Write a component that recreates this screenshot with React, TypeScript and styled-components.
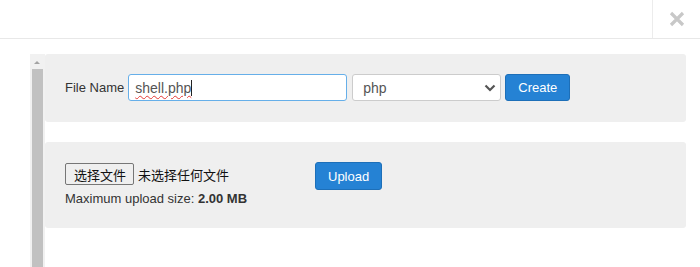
import styled, { createGlobalStyle } from "styled-components";

const GlobalStyle = createGlobalStyle`
  html, body {
    margin: 0;
    background: #fff;
  }
  body {
    font-family: "Liberation Sans", Arial, sans-serif;
    font-size: 13px;
    color: #333;
  }
`;

const Header = styled.div`
  height: 38px;
  border-bottom: 1px solid #e8e8e8;
  display: flex;
  justify-content: flex-end;
`;

const CloseBox = styled.div`
  width: 47px;
  border-left: 1px solid #ececec;
  display: flex;
  align-items: center;
  justify-content: center;
`;

const Body = styled.div`
  display: flex;
  padding: 15px 14px 0 30px;
  height: 213px;
`;

const ScrollTrack = styled.div`
  width: 15px;
  flex: none;
  background: #f1f1f1;
  display: flex;
  flex-direction: column;
  align-items: flex-start;
`;

const ScrollArrow = styled.div`
  width: 0;
  height: 0;
  margin: 7px 0 0 4px;
  border-left: 3px solid transparent;
  border-right: 3px solid transparent;
  border-bottom: 3px solid #a3a3a3;
`;

const ScrollThumb = styled.div`
  flex: 1;
  width: 11px;
  margin: 5px 0 0 2px;
  background: #c1c1c1;
`;

const Content = styled.div`
  flex: 1;
  display: flex;
  flex-direction: column;
  gap: 20px;
`;

const Panel = styled.div<{ $bottom?: number }>`
  background: #efefef;
  border-radius: 3px;
  padding: 20px 20px ${(p) => p.$bottom ?? 20}px;
`;

const Row = styled.div<{ $align?: string }>`
  display: flex;
  align-items: ${(p) => p.$align || "center"};
`;

const Label = styled.span`
  margin-right: 4px;
  color: #333;
`;

const TextField = styled.div`
  box-sizing: border-box;
  width: 219px;
  height: 27px;
  border: 1px solid #66afe9;
  border-radius: 3px;
  background: #fff;
  padding: 0 6px;
  display: flex;
  align-items: center;
  color: #555;
  font-size: 14px;
`;

const Typed = styled.span`
  text-decoration: underline wavy #e53935;
  text-decoration-thickness: 1px;
  text-underline-offset: 2px;
`;

const Caret = styled.span`
  width: 1px;
  height: 16px;
  background: #222;
`;

const Select = styled.div`
  box-sizing: border-box;
  width: 149px;
  height: 27px;
  margin-left: 5px;
  border: 1px solid #ccc;
  border-radius: 3px;
  background: #fff;
  padding: 0 4px 0 10px;
  display: flex;
  align-items: center;
  justify-content: space-between;
  color: #555;
  font-size: 14px;
`;

const Button = styled.button<{ $h: number; $gap?: number }>`
  box-sizing: border-box;
  height: ${(p) => p.$h}px;
  padding: 0 12px;
  margin-left: ${(p) => p.$gap ?? 0}px;
  border: 1px solid #1d6fb8;
  border-radius: 3px;
  background: #2582d4;
  color: #fff;
  font-family: "Liberation Sans", Arial, sans-serif;
  font-size: 13px;
`;

const UploadBox = styled.div`
  width: 250px;
  display: flex;
  flex-direction: column;
`;

const Picker = styled.div`
  display: flex;
  align-items: center;
  margin-top: 1px;
  font-family: "Noto Sans CJK SC", sans-serif;
  font-size: 13px;
  color: #111;
`;

const PickButton = styled.span`
  box-sizing: border-box;
  height: 22px;
  padding: 0 7px 0 8px;
  margin-right: 4px;
  border: 1px solid #767676;
  border-radius: 2px;
  background: #efefef;
  display: flex;
  align-items: center;
`;

const Note = styled.div`
  margin-top: 5px;
  line-height: 18px;
  color: #333;
`;

function App() {
  return (
    <>
      <GlobalStyle />
      <Header>
        <CloseBox>
          <svg width="16" height="16" viewBox="0 0 16 16">
            <path d="M2 2 L14 14 M14 2 L2 14" stroke="#c8c8c8" strokeWidth="3.2" />
          </svg>
        </CloseBox>
      </Header>
      <Body>
        <ScrollTrack>
          <ScrollArrow />
          <ScrollThumb />
        </ScrollTrack>
        <Content>
          <Panel $bottom={21}>
            <Row>
              <Label>File Name</Label>
              <TextField>
                <Typed>shell.php</Typed>
                <Caret />
              </TextField>
              <Select>
                <span>php</span>
                <svg width="12" height="8" viewBox="0 0 12 8">
                  <path d="M1.5 1.5 L6 6 L10.5 1.5" stroke="#555" strokeWidth="2.2" fill="none" />
                </svg>
              </Select>
              <Button $h={27} $gap={4}>Create</Button>
            </Row>
          </Panel>
          <Panel>
            <Row $align="flex-start">
              <UploadBox>
                <Picker>
                  <PickButton>选择文件</PickButton>
                  <span>未选择任何文件</span>
                </Picker>
                <Note>
                  Maximum upload size: <b>2.00 MB</b>
                </Note>
              </UploadBox>
              <Button $h={28}>Upload</Button>
            </Row>
          </Panel>
        </Content>
      </Body>
    </>
  );
}

export default App;
